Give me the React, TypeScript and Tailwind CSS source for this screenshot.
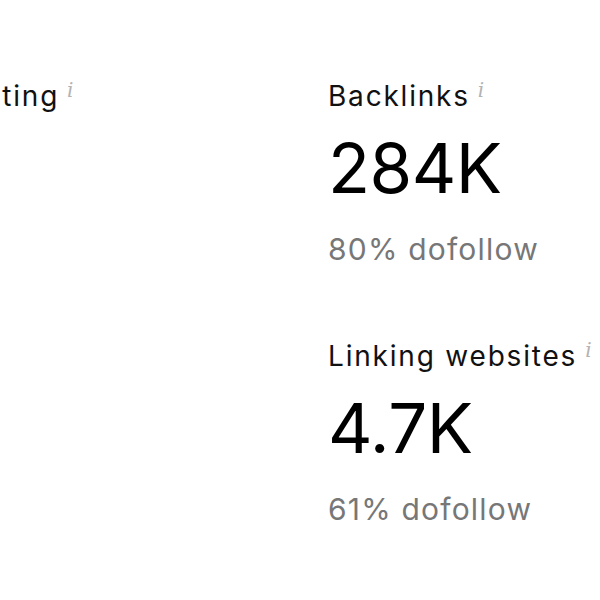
import React from "react";

function InfoMark() {
  return (
    <span className="relative -top-[9px] ml-[8px] text-[20px] italic leading-none text-[#b3b3b3] [font-family:'DejaVu_Serif',serif]">
      i
    </span>
  );
}

function Metric({ label, value, sub }: { label: string; value: string; sub: string }) {
  return (
    <div className="flex flex-col">
      <div className="whitespace-nowrap text-[28px] leading-[36px] tracking-[1.8px] text-[#111]">
        {label}
        <InfoMark />
      </div>
      <div className="mt-[14px] text-[69px] leading-[80px] tracking-[-0.5px] text-black">{value}</div>
      <div className="mt-[22px] text-[30px] leading-[38px] tracking-[1.2px] text-[#777]">{sub}</div>
    </div>
  );
}

export default function App() {
  return (
    <div className="h-[600px] w-[600px] overflow-hidden bg-white [font-family:Inter,sans-serif]">
      <div className="flex pt-[78px]">
        <div className="w-[328px] shrink-0 overflow-hidden">
          <div className="-ml-[156px] whitespace-nowrap text-[28px] leading-[36px] tracking-[1.8px] text-[#111]">
            Domain Rating
            <InfoMark />
          </div>
        </div>
        <div className="flex flex-col gap-[70px]">
          <Metric label="Backlinks" value="284K" sub="80% dofollow" />
          <Metric label="Linking websites" value="4.7K" sub="61% dofollow" />
        </div>
      </div>
    </div>
  );
}
